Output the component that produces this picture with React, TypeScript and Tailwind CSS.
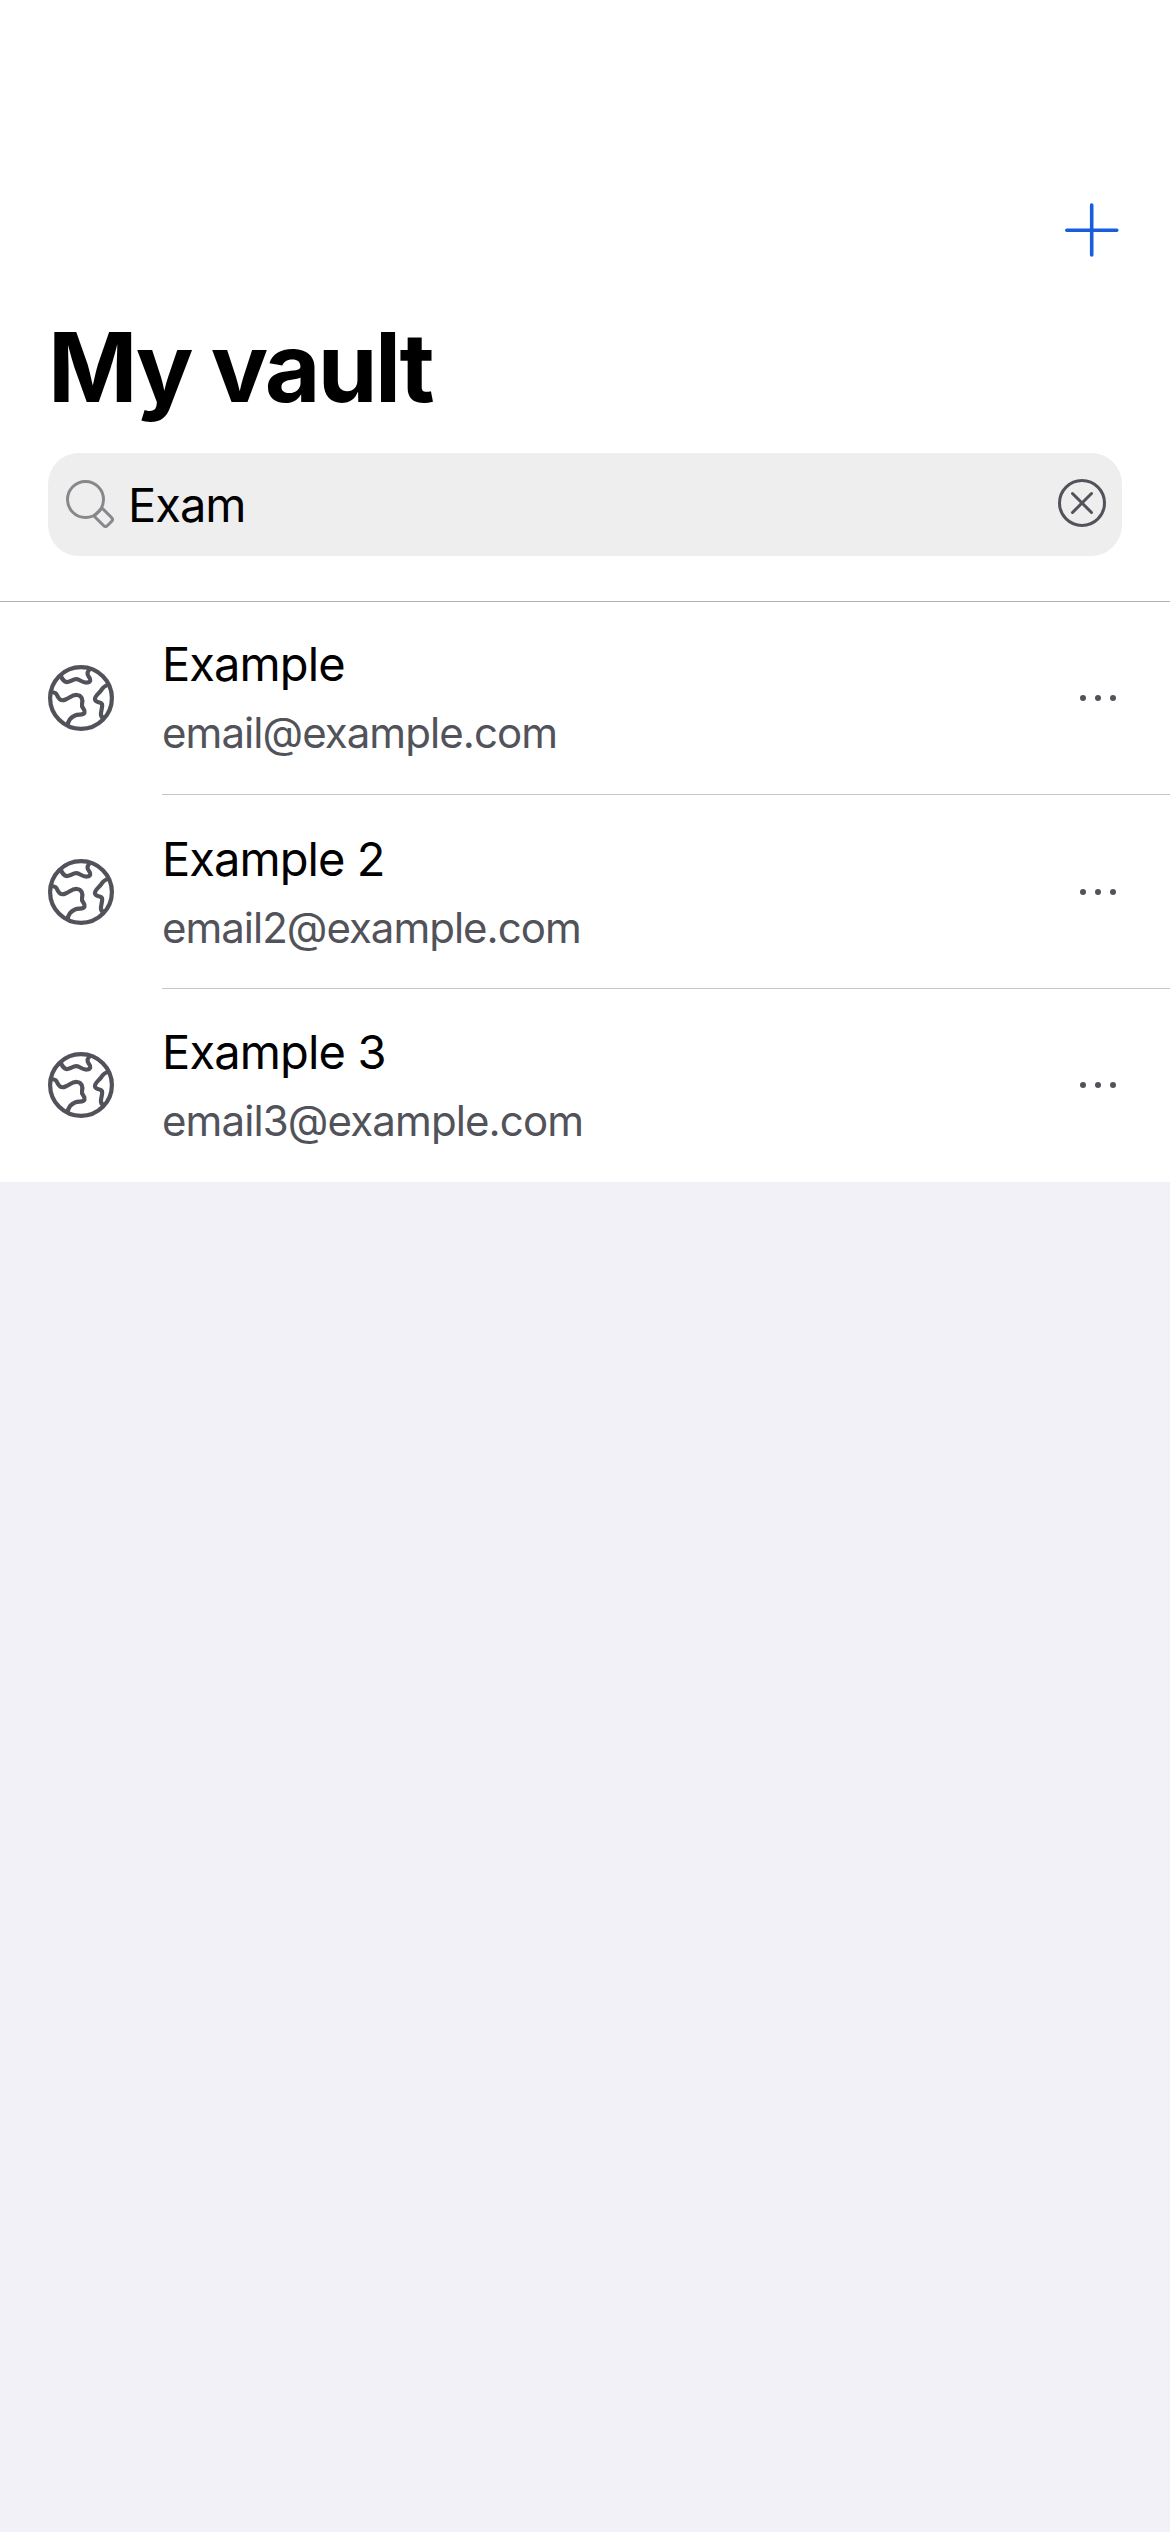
const items = [
  {
    name: 'Example',
    email: 'email@example.com',
    row: 'h-[193px]',
    icon: 'h-[192px]',
    body: 'border-b border-[#c6c6c8]',
    pad: 'pt-[33px]',
    dots: 'mt-[93px]',
    nameTracking: 'tracking-[-0.9px]',
    emailTracking: 'tracking-[-0.94px]',
  },
  {
    name: 'Example 2',
    email: 'email2@example.com',
    row: 'h-[194px]',
    icon: 'h-[194px]',
    body: 'border-b border-[#c6c6c8]',
    pad: 'pt-[35px]',
    dots: 'mt-[94px]',
    nameTracking: 'tracking-[-0.93px]',
    emailTracking: 'tracking-[-1px]',
  },
  {
    name: 'Example 3',
    email: 'email3@example.com',
    row: 'h-[193px]',
    icon: 'h-[192px]',
    body: '',
    pad: 'pt-[34px]',
    dots: 'mt-[93px]',
    nameTracking: 'tracking-[-0.85px]',
    emailTracking: 'tracking-[-0.88px]',
  },
];

function Globe() {
  return (
    <svg className="h-[66px] w-[66px]" viewBox="0 0 66 66" fill="none" stroke="#52525b" strokeWidth="4.2" strokeLinejoin="round">
      <circle cx="33" cy="33" r="30.900" />
      <path d="M12.5 10.5 C14.5 14.5 16 17.500 19.500 17 C23 16.500 25 14 28.500 14.200 C32 14.500 34.500 18 39 17.500 C43 17 43 14.500 41 12 C38.500 9 39 6 43 3.500" />
      <path d="M2.500 27 C8 27 8.500 29 10 32 C12 35.500 14 36 17.500 34.500 C22 32.500 24.500 29.500 29 30 C34 30.500 35 35 34 39 C33 43 37.500 44 36.500 47.500 C35.500 50.500 31 49 27 50.500 C22 52.500 20 55.500 19.500 61" />
      <path d="M60 20 C56.500 20.500 55 22.500 53 25.500 C50.500 29 46.500 31 47 34.500 C47.500 38 52.500 36.500 54 39 C55 42 52.500 46 53 50 C53.500 52.500 55 53 57 53" />
    </svg>
  );
}

function MoreDots({ className }: { className: string }) {
  return (
    <svg className={`mr-[54px] h-[6px] w-[36px] shrink-0 ${className}`} viewBox="0 0 36 6" fill="#52525b">
      <circle cx="3" cy="3" r="3" />
      <circle cx="18" cy="3" r="3" />
      <circle cx="33" cy="3" r="3" />
    </svg>
  );
}

export default function App() {
  return (
    <div className="flex h-[2532px] w-[1170px] flex-col overflow-hidden bg-[#f2f1f7] font-['Inter',sans-serif] text-black">
      <header className="flex h-[602px] shrink-0 flex-col border-b border-[#b2b2b2] bg-white px-12">
        <div className="flex justify-end pt-[203px] pr-[3px]">
          <svg className="h-[54px] w-[54px]" viewBox="0 0 54 54" stroke="#175ddc" strokeWidth="3.6" strokeLinecap="round">
            <path d="M26.700 2v50M1.800 27.300h50" />
          </svg>
        </div>
        <h1 className="mt-[61px] h-[135px] whitespace-nowrap text-[96px] leading-[98px] font-bold tracking-[-2.7px]">My vault</h1>
        <div className="flex h-[103px] shrink-0 items-center rounded-[31px] bg-[#eeeeee] pr-[16px] pl-[18px]">
          <svg className="mb-px h-[48px] w-[48px] shrink-0" viewBox="0 0 48 48" fill="none" stroke="#87878c" strokeWidth="3" strokeLinejoin="round">
            <circle cx="19.500" cy="19.500" r="18" />
            <path d="M28 36 L36 28 L45.500 37.500 Q47.500 39.500 45.500 41.500 L41.500 45.500 Q39.500 47.500 37.500 45.500 Z" />
          </svg>
          <span className="mt-px ml-[14px] flex-1 text-[47px] leading-[60px] tracking-[-1px]">Exam</span>
          <svg className="mb-[3px] h-[48px] w-[48px] shrink-0" viewBox="0 0 48 48" fill="none" stroke="#52525b" strokeWidth="3" strokeLinecap="round">
            <circle cx="24" cy="24" r="22.500" />
            <path d="M14.500 14.500l19 19M33.500 14.500l-19 19" />
          </svg>
        </div>
      </header>
      <main className="flex flex-col bg-white">
        {items.map((item) => (
          <div key={item.name} className={`flex pl-12 ${item.row}`}>
            <div className={`flex w-[114px] shrink-0 items-center ${item.icon}`}>
              <Globe />
            </div>
            <div className={`flex flex-1 ${item.body}`}>
              <div className={`flex flex-1 flex-col whitespace-nowrap ${item.pad}`}>
                <span className={`text-[47px] leading-[58px] ${item.nameTracking}`}>{item.name}</span>
                <span className={`mt-[14px] text-[42px] leading-[52px] text-[#52525b] ${item.emailTracking}`}>{item.email}</span>
              </div>
              <MoreDots className={item.dots} />
            </div>
          </div>
        ))}
      </main>
    </div>
  );
}
